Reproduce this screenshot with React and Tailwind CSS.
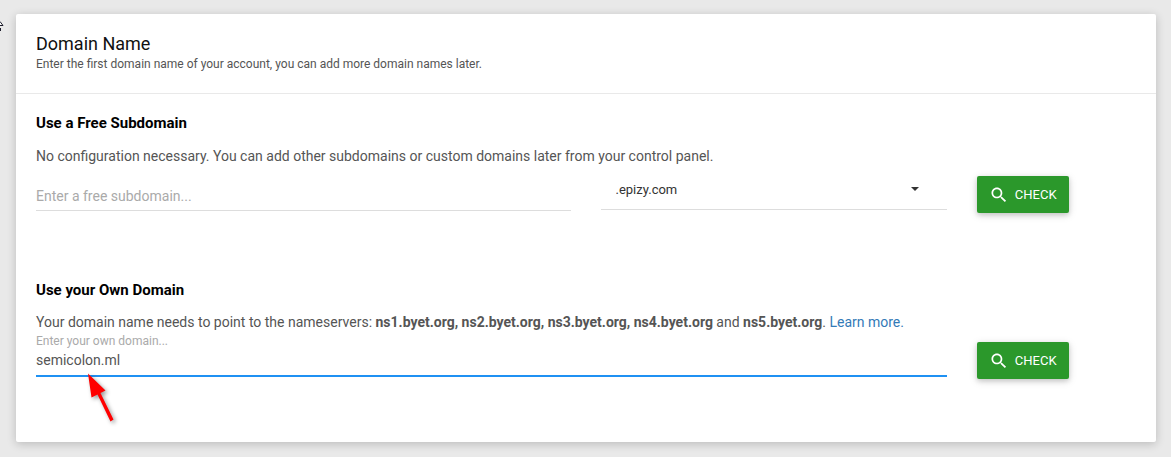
import { useState } from "react";

function CheckButton() {
  return (
    <button
      type="button"
      className="flex h-[37px] w-[92px] items-center rounded-[2px] bg-[#2b982b] pl-3 text-[13px] text-white shadow-[0_2px_5px_rgba(0,0,0,0.16),0_2px_10px_rgba(0,0,0,0.12)]"
    >
      <svg viewBox="0 0 24 24" className="mr-1.5 size-5 shrink-0" fill="currentColor" aria-hidden="true">
        <path d="M15.5 14h-.79l-.28-.27C15.41 12.59 16 11.11 16 9.5 16 5.91 13.09 3 9.5 3S3 5.91 3 9.5 5.91 16 9.5 16c1.61 0 3.09-.59 4.23-1.57l.27.28v.79l5 4.99L20.49 19l-4.99-5zm-6 0C7.01 14 5 11.99 5 9.5S7.01 5 9.5 5 14 7.01 14 9.5 11.99 14 9.5 14z" />
      </svg>
      <span className="pt-0.5">CHECK</span>
    </button>
  );
}

function Pointer() {
  return (
    <svg className="absolute left-0 top-5 h-3 w-1" viewBox="0 0 4 12" aria-hidden="true">
      <path d="M0 1.5 3 5.5H0" fill="#fff" stroke="#1d1d2b" strokeWidth="1" />
      <path d="M0 8h1v3H0z" fill="#1d1d2b" />
    </svg>
  );
}

function RedArrow() {
  return (
    <svg
      className="pointer-events-none absolute left-[50px] top-10 h-[52px] w-[30px] overflow-visible drop-shadow-[2px_2px_2px_rgba(0,0,0,0.4)]"
      viewBox="0 0 30 52"
      fill="#f00"
      aria-hidden="true"
    >
      <path d="M2 1.500 5.500 25.500 11.500 22.500 24.500 49.500 27.500 47.500 14.500 21 19.500 18.500Z" />
    </svg>
  );
}

export default function App() {
  const [own, setOwn] = useState("semicolon.ml");

  return (
    <main className="relative min-h-screen bg-[#e9e9e9] pb-[15px] pl-4 pr-[15px] pt-[14px] font-[Roboto,sans-serif] text-sm text-[#555]">
      <Pointer />
      <div className="rounded-[2px] bg-white shadow-[0_2px_10px_rgba(0,0,0,0.2)]">
        <header className="border-b border-[#e9e9e9] px-5 pb-[19px] pt-5">
          <h1 className="text-lg leading-5 text-[#111]">Domain Name</h1>
          <p className="text-xs leading-5">
            Enter the first domain name of your account, you can add more domain names later.
          </p>
        </header>
        <div className="pb-[63px] pl-5 pr-[21px] pt-5">
          <section>
            <h2 className="text-[15px] font-bold leading-[18px] text-black">Use a Free Subdomain</h2>
            <p className="mt-[14px] leading-5">
              No configuration necessary. You can add other subdomains or custom domains later from your control panel.
            </p>
            <form className="mt-2.5 grid grid-cols-12 items-start gap-x-[30px]" onSubmit={(e) => e.preventDefault()}>
              <input
                type="text"
                aria-label="Free subdomain"
                placeholder="Enter a free subdomain..."
                className="col-span-6 h-[35px] border-b border-[#ddd] pt-1.5 outline-none placeholder:text-[#aaa]"
              />
              <div className="relative col-span-4">
                <select
                  aria-label="Domain extension"
                  className="h-[34px] w-full appearance-none border-b border-[#ddd] bg-transparent pb-1 pl-[15px] text-[13px] text-[#333] outline-none"
                >
                  <option>.epizy.com</option>
                </select>
                <svg
                  className="pointer-events-none absolute right-7 top-[11px] h-1 w-2"
                  viewBox="0 0 8 4"
                  fill="#333"
                  aria-hidden="true"
                >
                  <path d="M0 0h8L4 4z" />
                </svg>
              </div>
              <div className="col-span-2">
                <CheckButton />
              </div>
            </form>
          </section>
          <section className="mt-[68px]">
            <h2 className="text-[15px] font-bold leading-[18px] text-black">Use your Own Domain</h2>
            <p className="mt-[13px] leading-5">
              Your domain name needs to point to the nameservers:{" "}
              <b>ns1.byet.org, ns2.byet.org, ns3.byet.org, ns4.byet.org</b> and <b>ns5.byet.org</b>.{" "}
              <a href="#learn-more" className="text-[#337ab7]">
                Learn more.
              </a>
            </p>
            <form className="grid grid-cols-12 items-start gap-x-[30px]" onSubmit={(e) => e.preventDefault()}>
              <div className="relative col-span-10 flex flex-col">
                <label htmlFor="own-domain" className="text-xs leading-[18px] text-[#aaa]">
                  Enter your own domain...
                </label>
                <input
                  id="own-domain"
                  type="text"
                  value={own}
                  onChange={(e) => setOwn(e.target.value)}
                  className="h-[27px] border-b-2 border-[#1f91f3] pb-1.5 outline-none"
                />
                <RedArrow />
              </div>
              <div className="col-span-2 pt-2.5">
                <CheckButton />
              </div>
            </form>
          </section>
        </div>
      </div>
    </main>
  );
}
